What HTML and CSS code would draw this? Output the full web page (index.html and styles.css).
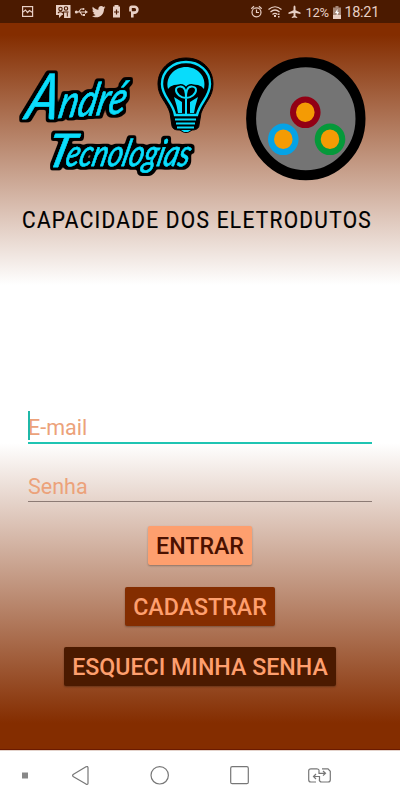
FILE: index.html
```html
<!DOCTYPE html>
<html lang="pt-BR">
<head>
  <meta charset="UTF-8">
  <meta name="viewport" content="width=device-width, initial-scale=1.0">
  <title>Capacidade dos Eletrodutos</title>
  <link rel="stylesheet" href="styles.css">
</head>
<body>
  <!-- Barra de status -->
  <header class="status-bar">
    <svg class="status-icons" width="145" height="23" viewBox="0 0 145 23">
      <g fill="none" stroke="#e8cfc4" stroke-width="1.2">
        <rect x="2.6" y="6.6" width="10" height="9.8"/>
        <path d="M3 12l2.500-2 2 2.500 2-2 3 2"/>
      </g>
      <path fill="#e8cfc4" d="M36 5h14.500v13H44v-3h-2l-3 3v-3h-3z"/>
      <g fill="none" stroke="#4b1a00" stroke-width="1.1">
        <circle cx="40.500" cy="9" r="1.700"/><circle cx="46" cy="8.500" r="1.700"/>
        <path d="M38 13q2.500-2.500 5 0M43.500 18v-6h5"/>
      </g>
      <path stroke="#4b1a00" d="M47.300 12.500v4"/>
      <path fill="none" stroke="#e8cfc4" stroke-width="1.100" d="M56 12h10M58.500 12l2.500-3h2M60 12l2 3h2"/>
      <g fill="#e8cfc4">
        <circle cx="56.300" cy="12" r="1.500"/><circle cx="63.500" cy="9" r="1"/>
        <path d="M63 14h2v2h-2zM65 10l3 2-3 2z"/>
        <path d="M85.500 7.500l-1.500 1.200c.2 5-3.500 8.600-7.800 8.600-1.800 0-3.200-.5-4.200-1.300 1.400.1 2.700-.2 3.700-1-1.200-.2-2-.9-2.400-1.900h1.200c-1.300-.5-2-1.500-2-2.800l1.100.3c-1.200-1-1.500-2.500-.8-3.800 1.500 1.800 3.300 2.800 5.600 2.900-.5-2 1-3.700 2.900-3.700.8 0 1.500.3 2 .9l1.800-.7-.9 1.400z"/>
        <path d="M93 6.500h1.500V5h4v1.500h1.500v11h-7z"/>
      </g>
      <path fill="none" stroke="#e8cfc4" stroke-width="2.600" d="M110.500 11.500V8q0-1.200 1.200-1.200h2.800a2.900 2.900 0 0 1 0 5.800h-2.200v4.900"/>
      <path stroke="#4b1a00" stroke-width="1.200" d="M96.500 9.500v5M94 12h5"/>
    </svg>
    <div class="status-right">
      <svg width="52" height="23" viewBox="0 0 52 23">
        <g fill="none" stroke="#e8cfc4" stroke-width="1.200">
          <circle cx="6.500" cy="12.300" r="4.500"/>
          <path d="M6.500 9.500v3h2.500M1.300 8.800L4 6.300M9 6.300l2.700 2.500"/>
          <path d="M18.500 9.500q6.500-5.500 13 0M20.500 12q4.500-4 9 0M22.500 14.500q2.500-2.300 5 0"/>
        </g>
        <path fill="#e8cfc4" d="M24 15h2v2h-2zM28 13.500h1.500V15H28zM28 16h1.500v1.500H28z"/>
        <path fill="#e8cfc4" d="M44.500 5.500q1 0 1 2v2.800l5 2.300v1.300l-5-1v3l1.700 1.200v1l-2.700-.5-2.700.5v-1l1.700-1.200v-3l-5 1v-1.300l5-2.300V7.500q0-2 1-2z"/>
      </svg>
      <span class="battery-text">12%</span>
      <svg class="battery" width="8" height="13" viewBox="0 0 8 13">
        <path fill="#a58778" d="M2.500 0h3v1.500H8V9H0V1.500h2.500z"/>
        <path fill="#e8cfc4" d="M0 9h8v4H0z"/>
        <path fill="#fff" d="M4.500 3L2 7h1.700v3L6 6H4.500z"/>
      </svg>
      <span class="clock">18:21</span>
    </div>
  </header>

  <!-- Tela de login -->
  <main class="login">
    <div class="brand">
      <svg class="logo" width="200" height="132" viewBox="18 54 200 132">
        <defs>
          <!-- contorno preto por baixo das letras -->
          <filter id="contorno" x="-10%" y="-10%" width="120%" height="120%">
            <feMorphology in="SourceAlpha" operator="dilate" radius="3" result="grosso"/>
            <feGaussianBlur in="grosso" stdDeviation="1.2" result="suave"/>
            <feComponentTransfer in="suave" result="borda">
              <feFuncA type="linear" slope="3" intercept="-0.9"/>
            </feComponentTransfer>
            <feMerge>
              <feMergeNode in="borda"/>
              <feMergeNode in="SourceGraphic"/>
            </feMerge>
          </filter>
        </defs>
        <g class="logo-text" filter="url(#contorno)">
          <text transform="translate(24 119) skewX(-12)" font-size="63" textLength="32" lengthAdjust="spacingAndGlyphs">A</text>
          <text transform="translate(57 118) rotate(-4) skewX(-16)" font-size="45" textLength="67" lengthAdjust="spacingAndGlyphs">ndré</text>
          <text transform="translate(44 167) skewX(-14)" font-size="46" textLength="27" lengthAdjust="spacingAndGlyphs">T</text>
          <text transform="translate(64 166) skewX(-14)" font-size="37" textLength="124" lengthAdjust="spacingAndGlyphs">ecnologias</text>
        </g>
        <!-- lâmpada -->
        <path fill="#000" stroke="#000" stroke-width="1" d="M186 58c-16 0-28 11-28 26 0 13 9 18 12 29l2 13c1 4 5 4 8 4q6 5 12 0c3 0 7-1 7-5l2-12c4-11 12-16 12-29 0-15-11-26-27-26z"/>
        <g fill="none" stroke="#08dcfb" stroke-width="2.400">
          <path d="M175 115c-2-13-13-18-13-31 0-13 11-22 24-22s24 9 24 22c0 13-10 18-13 31z"/>
          <path stroke-width="2.200" d="M175 119.500h21M176 123.500h19M177 127.500h17"/>
        </g>
        <path fill="#08dcfb" d="M168 89c-3-13 7-22 18-22s21 9 18 22q-2-3-6-4-8-1-12 4-4-5-12-4-4 1-6 4zM174 97l8 5v11h-4q-1-7-4-16zM198 97l-8 5v11h4q1-7 4-16zM181 130h10l-3 2h-4z"/>
        <path fill="none" stroke="#000" stroke-width="5" d="M186 113V98c-5 0-10-4-10-8s7-5 9 0M186 98c5 0 10-4 10-8s-7-5-9 0"/>
        <path fill="none" stroke="#08dcfb" stroke-width="2" d="M186 114V96M186 98c-5 0-10-4-10-8s7-5 9 0q1 3 1 8M186 98c5 0 10-4 10-8s-7-5-9 0q-1 3-1 8"/>
      </svg>
      <svg class="cable" width="120" height="124" viewBox="0 0 120 124">
        <ellipse cx="59.800" cy="61.800" rx="54.700" ry="56.500" fill="#747474" stroke="#000" stroke-width="10"/>
        <g fill="#f49b04" stroke-width="6">
          <ellipse cx="59.300" cy="55.300" rx="12.300" ry="12.800" stroke="#920015"/>
          <ellipse cx="37.300" cy="82.300" rx="12.300" ry="12.800" stroke="#05a3e6"/>
          <ellipse cx="84" cy="82.300" rx="12.300" ry="12.800" stroke="#05993a"/>
        </g>
      </svg>
    </div>
    <h1 class="title">
      <svg width="370" height="30" viewBox="0 0 370 30">
        <text x="0" y="23" textLength="350" lengthAdjust="spacingAndGlyphs">CAPACIDADE DOS ELETRODUTOS</text>
      </svg>
    </h1>

    <form class="login-form">
      <div class="field field-active"><span class="cursor"></span>E-mail</div>
      <div class="field">Senha</div>
      <button type="button" class="btn btn-entrar">ENTRAR</button>
      <button type="button" class="btn btn-cadastrar">CADASTRAR</button>
      <button type="button" class="btn btn-esqueci">ESQUECI MINHA SENHA</button>
    </form>
  </main>

  <!-- Barra de navegação -->
  <nav class="nav-bar">
    <svg width="400" height="49" viewBox="0 0 400 49" fill="none" stroke="#777" stroke-width="1.200">
      <path fill="#888" stroke="none" d="M22 21.500h6v6h-6z"/>
      <path stroke-linejoin="round" d="M73.500 23.200L86 15.800q2-.8 2 1v15.400q0 1.800-2 .9L73.500 25.800q-1.800-1.300 0-2.600z"/>
      <circle cx="159.700" cy="24.300" r="8.700"/>
      <rect x="230.700" y="15.700" width="17.600" height="17" rx="1.500"/>
      <path d="M316 31h-5q-2.300 0-2.300-2.300V19.800q0-2 2.300-2h6q2 0 2.300 2M322 17.800h6l2.300 2.500v8.400q0 2.300-2.300 2.300h-6.500q-2 0-2.300-2.300M319 19.800v2.500h6M323 20l2.500 2.300L323 24.600M319.500 29v-3.500h-6M316 23l-2.500 2.500L316 28"/>
    </svg>
  </nav>
</body>
</html>
```
FILE: styles.css
```css
* {
  margin: 0;
  padding: 0;
  box-sizing: border-box;
}
body {
  width: 400px;
  height: 800px;
  display: flex;
  flex-direction: column;
  overflow: hidden;
  font-family: Roboto, sans-serif;
  background: #fff;
}
svg {
  display: block;
  overflow: visible;
}

/* ===== Barra de status ===== */
.status-bar {
  height: 23px;
  display: flex;
  justify-content: space-between;
  padding: 0 21px 0 20px;
  background: #4b1a00;
  color: #e8cfc4;
}
.status-right {
  display: flex;
  align-items: center;
}
.battery-text {
  width: 24px;
  margin-left: 3px;
  font-size: 13px;
  letter-spacing: -0.3px;
  white-space: nowrap;
  padding-top: 1px;
}
.battery {
  margin: 1px 3px 0 4px;
}
.clock {
  font-size: 14.5px;
  letter-spacing: -0.3px;
  padding-top: 2px;
}

/* ===== Login ===== */
.login {
  height: 727px;
  background: linear-gradient(#842d00 0, #842d00 12px, #fff 262px, #fff 420px, #842d00 700px);
  border-bottom: 1px solid #6b1a00;
}
.brand {
  display: flex;
  gap: 28px;
  padding: 31px 0 0 18px;
}
.cable {
  margin-top: 3px;
}
.logo-text {
  font-family: Lato, sans-serif;
  font-style: italic;
  font-weight: 400;
  fill: #08dcfb;
  stroke: #08dcfb;
  stroke-width: 0.4px;
  stroke-linejoin: round;
}
.title {
  margin: 19px 0 0 22px;
  height: 30px;
}
.title text {
  font-family: Roboto, sans-serif;
  font-size: 23px;
  font-weight: 400;
  letter-spacing: 1.4px;
  fill: #000;
  stroke: #000;
  stroke-width: 0.2px;
}

/* ===== Formulário ===== */
.login-form {
  display: flex;
  flex-direction: column;
  align-items: center;
  padding-top: 174px;
}
.field {
  position: relative;
  width: 344px;
  height: 34px;
  margin-bottom: 24px;
  border-bottom: 1px solid #8c7b75;
  font-size: 21.5px;
  line-height: 37px;
  color: #eca27a;
}
.field-active {
  height: 35px;
  border-bottom: 2px solid #1fc4b2;
}
.cursor {
  position: absolute;
  left: 0;
  top: 2px;
  width: 2px;
  height: 29px;
  background: #1fb8a8;
}
.btn {
  height: 39px;
  margin-bottom: 21.5px;
  padding: 0 8px;
  border: none;
  border-radius: 2px;
  box-shadow: 0 1px 2px rgba(0,0,0,0.3);
  font-family: Roboto, sans-serif;
  font-size: 23.2px;
  font-weight: 500;
  line-height: 41px;
  white-space: nowrap;
}
.btn-entrar {
  background: #fe9f6e;
  color: #4b1100;
}
.btn-cadastrar {
  background: #842d00;
  color: #fe9f6e;
}
.btn-esqueci {
  background: #4b1a00;
  color: #fe9f6e;
}

/* ===== Navegação ===== */
.nav-bar {
  height: 50px;
  border-top: 1px solid #e4d3cb;
  background: #fff;
}
```
